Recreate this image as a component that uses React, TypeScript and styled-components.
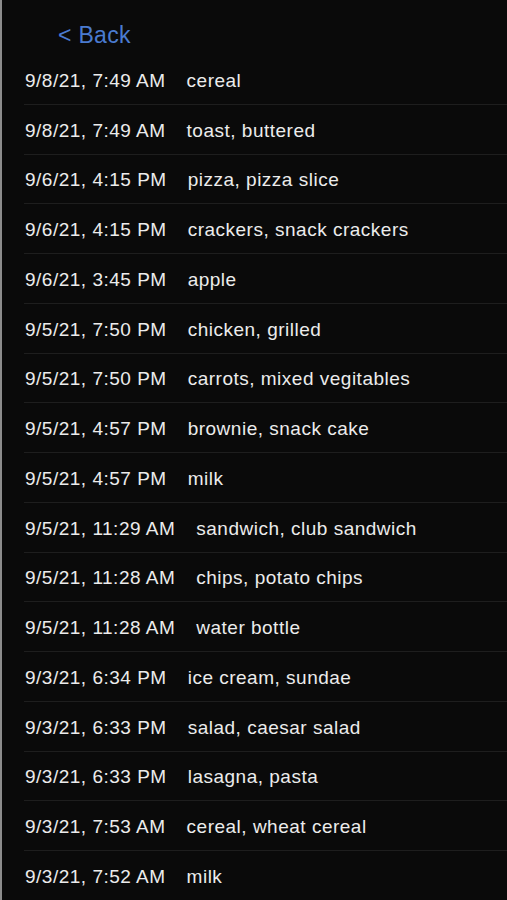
import React from 'react'
import styled, { createGlobalStyle } from 'styled-components'

interface Entry {
	time: string
	food: string
}

const entries: Entry[] = [
	{ time: '9/8/21, 7:49 AM', food: 'cereal' },
	{ time: '9/8/21, 7:49 AM', food: 'toast, buttered' },
	{ time: '9/6/21, 4:15 PM', food: 'pizza, pizza slice' },
	{ time: '9/6/21, 4:15 PM', food: 'crackers, snack crackers' },
	{ time: '9/6/21, 3:45 PM', food: 'apple' },
	{ time: '9/5/21, 7:50 PM', food: 'chicken, grilled' },
	{ time: '9/5/21, 7:50 PM', food: 'carrots, mixed vegitables' },
	{ time: '9/5/21, 4:57 PM', food: 'brownie, snack cake' },
	{ time: '9/5/21, 4:57 PM', food: 'milk' },
	{ time: '9/5/21, 11:29 AM', food: 'sandwich, club sandwich' },
	{ time: '9/5/21, 11:28 AM', food: 'chips, potato chips' },
	{ time: '9/5/21, 11:28 AM', food: 'water bottle' },
	{ time: '9/3/21, 6:34 PM', food: 'ice cream, sundae' },
	{ time: '9/3/21, 6:33 PM', food: 'salad, caesar salad' },
	{ time: '9/3/21, 6:33 PM', food: 'lasagna, pasta' },
	{ time: '9/3/21, 7:53 AM', food: 'cereal, wheat cereal' },
	{ time: '9/3/21, 7:52 AM', food: 'milk' },
]

const App = () => {
	return (
		<>
			<GlobalStyle />
			<Screen>
				<Header>
					<BackButton>&lt; Back</BackButton>
				</Header>
				<List>
					{entries.map((entry, i) => (
						<Row key={i}>
							<Time>{entry.time}</Time>
							<Food>{entry.food}</Food>
						</Row>
					))}
				</List>
			</Screen>
		</>
	)
}

export default App

const GlobalStyle = createGlobalStyle`
	html, body {
		margin: 0;
		padding: 0;
		background: #000;
	}
	body {
		font-family: "Liberation Sans", Arial, sans-serif;
		-webkit-font-smoothing: antialiased;
	}
`

const Screen = styled.div`
	width: 507px;
	height: 900px;
	box-sizing: border-box;
	border-left: 2px solid #8c8c8c;
	background: #0a0a0a;
	overflow: hidden;
	display: flex;
	flex-direction: column;
`

const Header = styled.div`
	flex-shrink: 0;
	height: 55px;
	display: flex;
	align-items: center;
	padding-left: 56px;
	padding-top: 16px;
	box-sizing: border-box;
`

const BackButton = styled.span`
	color: #4a7bd0;
	font-size: 23px;
	letter-spacing: 0.3px;
`

const List = styled.div`
	flex-shrink: 0;
	display: flex;
	flex-direction: column;
`

const Row = styled.div`
	flex-shrink: 0;
	height: 49.75px;
	box-sizing: border-box;
	margin-left: 22px;
	padding-left: 1px;
	padding-top: 3px;
	display: flex;
	align-items: center;
	gap: 21px;
	border-bottom: 1px solid #1e1e1e;
	color: #ececec;
	font-size: 19px;
	letter-spacing: 0.5px;
`

const Time = styled.span`
	white-space: nowrap;
`

const Food = styled.span`
	white-space: nowrap;
`
